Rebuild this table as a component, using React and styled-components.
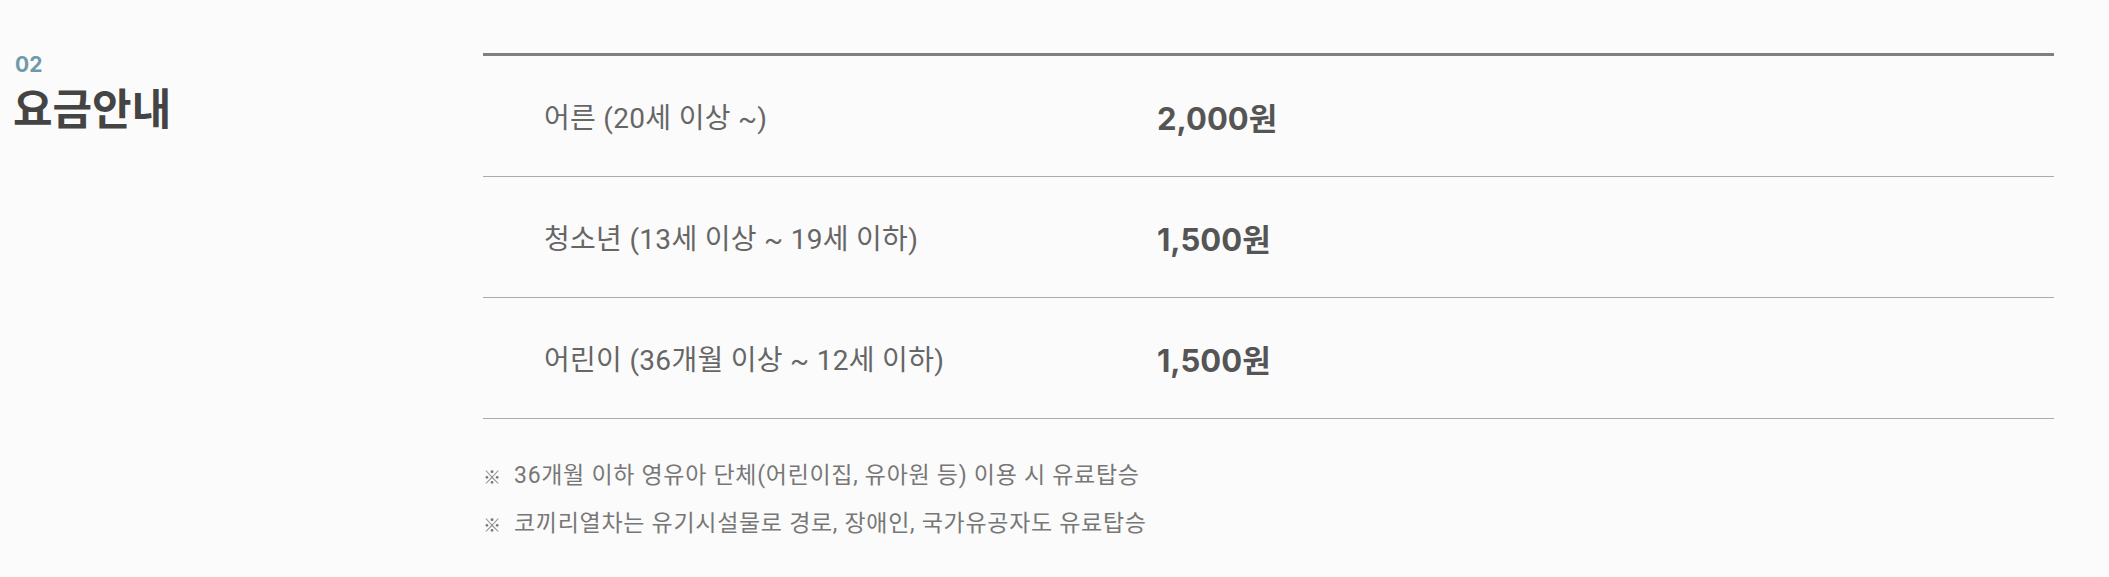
import React from "react";
import styled, { createGlobalStyle } from "styled-components";

const Global = createGlobalStyle`
  html, body {
    margin: 0;
    padding: 0;
    background: #fbfbfb;
  }
  body {
    font-family: "Roboto", "Noto Sans CJK KR", sans-serif;
    color: #555;
  }
`;

const Section = styled.section`
  display: grid;
  grid-template-columns: 468px 1fr;
  padding: 53px 55px 40px 15px;
`;

const TitleBlock = styled.div`
  display: flex;
  flex-direction: column;
`;

const Num = styled.span`
  font-family: "Inter", "Noto Sans CJK KR", sans-serif;
  font-size: 21px;
  font-weight: 700;
  color: #6f9ba8;
  line-height: 1;
  margin-top: 1px;
`;

const Title = styled.h2`
  margin: 8px 0 0 -2px;
  font-family: "Noto Sans CJK KR", sans-serif;
  font-size: 43px;
  font-weight: 700;
  color: #444;
  line-height: 1.1;
`;

const Table = styled.div`
  border-top: 3px solid #808080;
`;

const Row = styled.div`
  display: grid;
  grid-template-columns: 674px 1fr;
  align-items: center;
  height: 121px;
  border-bottom: 1px solid #ababab;
  box-sizing: border-box;
`;

const Label = styled.span`
  padding-left: 61px;
  font-size: 28px;
  font-weight: 400;
  letter-spacing: 0.3px;
  color: #666;
`;

const Price = styled.span`
  font-family: "Inter", "Noto Sans CJK KR", sans-serif;
  font-size: 31px;
  font-weight: 700;
  color: #555;
`;

const Notes = styled.ul`
  list-style: none;
  margin: 33px 0 0;
  padding: 0;
`;

const Note = styled.li`
  display: flex;
  align-items: center;
  gap: 13px;
  font-size: 23px;
  letter-spacing: 0.7px;
  line-height: 48px;
  color: #777;
  &::before {
    content: "※";
    font-family: "Noto Sans CJK KR", sans-serif;
    font-size: 18px;
    letter-spacing: 0;
    color: #777;
  }
`;

const rows = [
  { label: "어른 (20세 이상 ~)", price: "2,000원" },
  { label: "청소년 (13세 이상 ~ 19세 이하)", price: "1,500원" },
  { label: "어린이 (36개월 이상 ~ 12세 이하)", price: "1,500원" },
];

const notes = [
  "36개월 이하 영유아 단체(어린이집, 유아원 등) 이용 시 유료탑승",
  "코끼리열차는 유기시설물로 경로, 장애인, 국가유공자도 유료탑승",
];

export default function App() {
  return (
    <>
      <Global />
      <Section>
        <TitleBlock>
          <Num>02</Num>
          <Title>요금안내</Title>
        </TitleBlock>
        <div>
          <Table>
            {rows.map((r) => (
              <Row key={r.label}>
                <Label>{r.label}</Label>
                <Price>{r.price}</Price>
              </Row>
            ))}
          </Table>
          <Notes>
            {notes.map((n) => (
              <Note key={n}>{n}</Note>
            ))}
          </Notes>
        </div>
      </Section>
    </>
  );
}
